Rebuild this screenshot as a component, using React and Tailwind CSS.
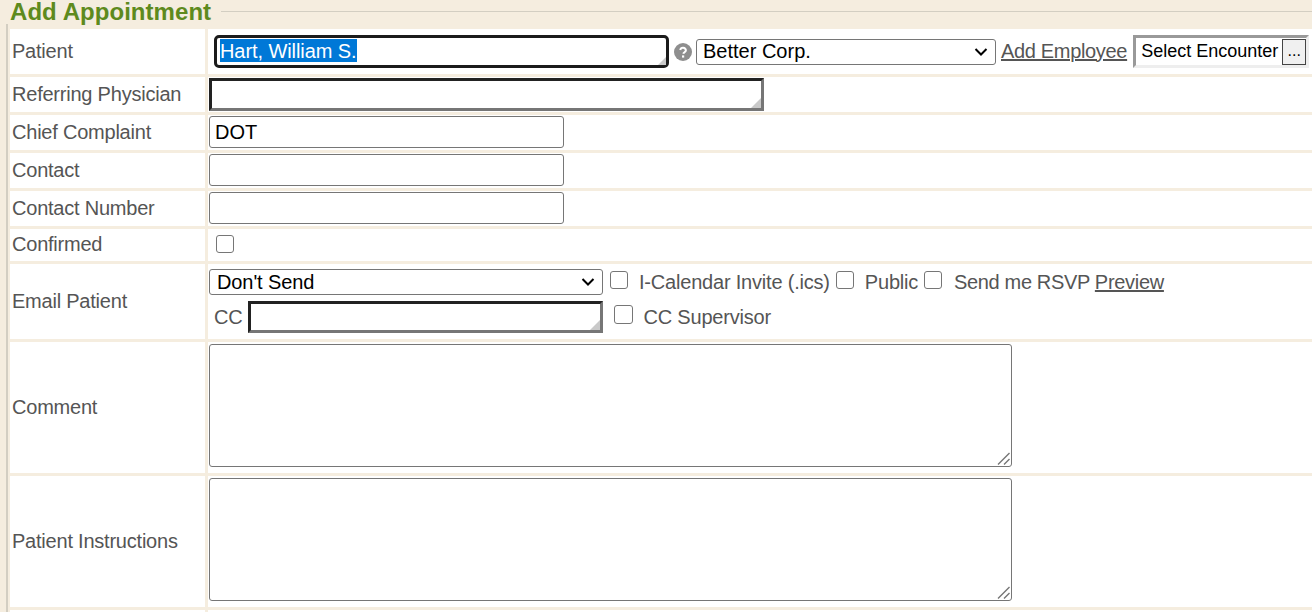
const font = "font-['Liberation_Sans',Arial,sans-serif]";
const label = "bg-white flex items-center pl-[2px] pb-[2px] text-[20px] tracking-[-0.22px] leading-none text-[#555]";
const cell = "bg-white flex items-center min-w-0";
const cellUp = "bg-white flex items-center min-w-0 pb-[2px]";
const plain = "ml-px h-[32px] w-[355px] border border-[#767676] rounded-[3px] bg-white px-[5px] pt-[2px] text-[20px] text-black outline-none box-border";

function Box({ className = "" }) {
  return <input type="checkbox" className={"appearance-none block w-[18px] h-[18px] border border-[#767676] rounded-[3px] bg-white m-0 shrink-0 " + className} />;
}

function Corner({ size = 10 }) {
  return (
    <svg className="absolute right-0 bottom-0" width={size} height={size} viewBox="0 0 10 10">
      <path d="M10 0V10H0Z" fill="#c9c9c9" />
    </svg>
  );
}

function Inset({ className = "" }) {
  return (
    <div className={"relative box-border bg-white border-[3px] border-t-[#222] border-l-[#222] border-r-[#767676] border-b-[#767676] " + className}>
      <Corner />
    </div>
  );
}

function Chevron() {
  return (
    <svg className="absolute right-[7px] top-1/2 -translate-y-1/2 pointer-events-none" width="14" height="9" viewBox="0 0 14 9" fill="none">
      <path d="M1.5 1.5 7 7l5.5-5.5" stroke="#000" strokeWidth="2" />
    </svg>
  );
}

function FakeSelect({ text, className = "" }) {
  return (
    <div className={"relative box-border border border-[#767676] rounded-[3px] bg-white flex items-center text-[20px] leading-none text-black " + className}>
      {text}
      <Chevron />
    </div>
  );
}

function Area() {
  return (
    <div className="relative ml-px mt-[2px] w-[803px] h-[123px]">
      <textarea readOnly className="w-full h-full border border-[#767676] rounded-[3px] bg-white box-border block outline-none resize-none" />
      <svg className="absolute right-[2px] bottom-[2px] pointer-events-none" width="13" height="13" viewBox="0 0 13 13" fill="none">
        <path d="M1 12.5 12.5 1M7 12.5 12.5 7" stroke="#767676" strokeWidth="1.4" />
      </svg>
    </div>
  );
}

export default function App() {
  return (
    <div className={"w-[1312px] h-[612px] overflow-hidden bg-[#f5eddf] relative " + font}>
      <div className="ml-[6px] border-l-2 border-[#d3cec2] h-full mt-[12px] relative">
        <div className="absolute left-0 right-0 -top-px h-px bg-[#d3cec2]" />
        <div className="absolute -left-[2px] -top-[12px] bg-[#f5eddf] pl-[4px] pr-[10px] text-[24px] tracking-[0.05px] leading-[24px] font-bold text-[#5e8a1d]">Add Appointment</div>
        <div className="pt-[17px] pl-[2px] grid grid-cols-[195px_1fr] gap-[3px] grid-rows-[45px_35px_35px_35px_35px_32px_75px_131px_131px_20px]">
          <div className={label}>Patient</div>
          <div className={cell}>
            <div className="ml-[6px] relative box-border w-[455px] h-[33px] border-[3px] border-[#1b1b1b] rounded-[5px] bg-white flex items-center pl-[3px] pb-[2px] text-[20px] tracking-[-0.08px] leading-none text-black">
              <span className="bg-[#0078d7] text-white h-[23px] flex items-center">Hart, William S.</span>
              <Corner size={8} />
            </div>
            <svg className="ml-[5px]" width="18" height="18" viewBox="0 0 18 18">
              <circle cx="9" cy="9" r="9" fill="#8e8e8e" />
              <path d="M6.2 7a2.9 2.9 0 0 1 5.7.2c0 1.9-2.3 2-2.6 3.6" fill="none" stroke="#fff" strokeWidth="2" />
              <rect x="8" y="12.4" width="2.2" height="2.2" fill="#fff" />
            </svg>
            <FakeSelect text="Better Corp." className="ml-[4px] w-[300px] h-[26px] pl-[6px] pb-[2px]" />
            <a className="ml-[5px] pb-[2px] text-[20px] tracking-[-0.33px] leading-none text-[#555] underline whitespace-nowrap">Add Employee</a>
            <div className="ml-[6px] box-border w-[176px] h-[33px] flex items-center bg-white border-[3px] border-t-[#999] border-l-[#999] border-r-[#eee] border-b-[#eee] text-[18px] leading-none text-black whitespace-nowrap">
              <span className="ml-[5px] pb-[2px]">Select Encounter</span>
              <span className="ml-[4px] box-border w-[24px] h-[26px] shrink-0 bg-[#f0f0f0] border border-[#444] flex items-end justify-center pb-[5px] text-[16px]">...</span>
            </div>
          </div>

          <div className={label}>Referring Physician</div>
          <div className={cell}><Inset className="ml-px w-[555px] h-[33px]" /></div>

          <div className={label}>Chief Complaint</div>
          <div className={cellUp}><input readOnly value="DOT" className={plain} /></div>

          <div className={label}>Contact</div>
          <div className={cellUp}><input readOnly value="" className={plain} /></div>

          <div className={label}>Contact Number</div>
          <div className={cellUp}><input readOnly value="" className={plain} /></div>

          <div className={label}>Confirmed</div>
          <div className={cellUp}><Box className="ml-[8px]" /></div>

          <div className={label}>Email Patient</div>
          <div className="bg-white min-w-0 flex flex-col text-[20px] tracking-[-0.2px] leading-none text-[#555]">
            <div className="flex items-center mt-[5px] h-[26px] pl-px whitespace-nowrap">
              <FakeSelect text="Don't Send" className="w-[394px] h-[26px] pl-[7px] tracking-[-0.1px]" />
              <Box className="ml-[7px] -mt-[5px]" />
              <span className="ml-[11px]">I-Calendar Invite (.ics)</span>
              <Box className="ml-[6px] -mt-[5px]" />
              <span className="ml-[11px]">Public</span>
              <Box className="ml-[6px] -mt-[5px]" />
              <span className="ml-[12px] tracking-[-0.36px]">Send me RSVP</span>
              <a className="ml-[5px] tracking-[-0.3px] underline">Preview</a>
            </div>
            <div className="flex items-center mt-[6px] h-[32px] whitespace-nowrap">
              <span className="ml-[6px]">CC</span>
              <Inset className="ml-[5px] w-[355px] h-[32px]" />
              <Box className="ml-[11px] -mt-[5px] w-[19px] h-[19px]" />
              <span className="ml-[11px]">CC Supervisor</span>
            </div>
          </div>

          <div className={label}>Comment</div>
          <div className="bg-white min-w-0"><Area /></div>

          <div className={label}>Patient Instructions</div>
          <div className="bg-white min-w-0"><Area /></div>

          <div className="bg-white" />
          <div className="bg-white" />
        </div>
      </div>
    </div>
  );
}
